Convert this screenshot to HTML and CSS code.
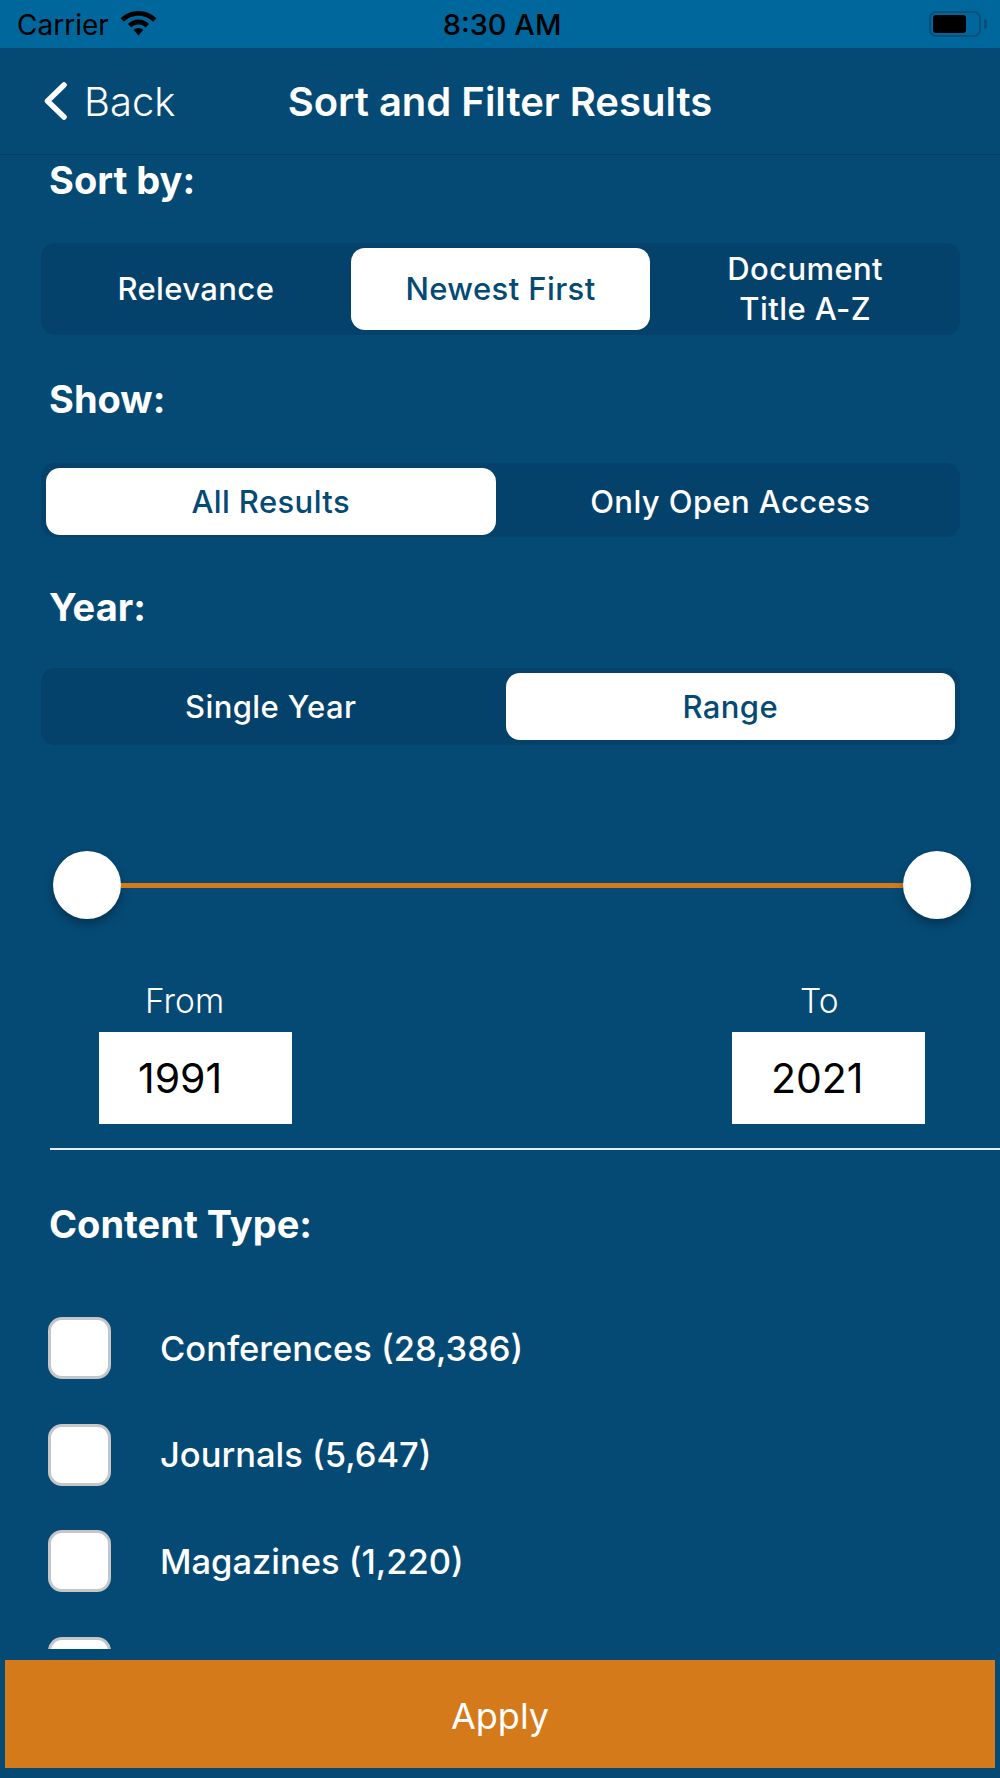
FILE: index.html
```html
<!DOCTYPE html>
<html lang="en">
<head>
  <meta charset="UTF-8">
  <title>Sort and Filter Results</title>
  <link rel="stylesheet" href="styles.css">
</head>
<body>
  <div class="status-bar">
    <div class="status-left">
      <span class="carrier">Carrier</span>
      <svg class="wifi-icon" width="37" height="25" viewBox="0 0 37 25">
        <path d="M18.5 0C11.5 0 5.2 2.8 .6 7.300L3.900 10.800C7.700 7.100 12.800 4.800 18.500 4.800S29.300 7.100 33.100 10.800L36.400 7.300C31.800 2.800 25.500 0 18.500 0Z"/>
        <path d="M18.500 8.600C14.600 8.600 10.800 10.200 8 12.900L11.300 16.400C13.200 14.600 15.800 13.400 18.500 13.400S23.800 14.600 25.700 16.400L29 12.900C26.200 10.200 22.400 8.600 18.500 8.600Z"/>
        <path d="M18.500 17C16.700 17 15.100 17.700 13.800 18.900L18.500 24.500L23.200 18.900C21.900 17.700 20.300 17 18.500 17Z"/>
      </svg>
    </div>
    <span class="clock">8:30 AM</span>
    <div class="status-right">
      <div class="battery"><div class="battery-level"></div></div>
      <div class="battery-nub"></div>
    </div>
  </div>

  <div class="nav-bar">
    <div class="back">
      <svg class="back-icon" width="25" height="40" viewBox="0 0 25 40">
        <path d="M21 4L4.500 20L21 36"/>
      </svg>
      <span>Back</span>
    </div>
    <span class="nav-title">Sort and Filter Results</span>
  </div>

  <div class="content">
    <h2 class="section-label sort-label">Sort by:</h2>
    <div class="segments segments-sort">
      <div class="segment">Relevance</div>
      <div class="segment active">Newest First</div>
      <div class="segment">Document<br>Title A-Z</div>
    </div>

    <h2 class="section-label show-label">Show:</h2>
    <div class="segments segments-short">
      <div class="segment active">All Results</div>
      <div class="segment">Only Open Access</div>
    </div>

    <h2 class="section-label year-label">Year:</h2>
    <div class="segments segments-short year-segments">
      <div class="segment">Single Year</div>
      <div class="segment active">Range</div>
    </div>

    <div class="slider">
      <div class="thumb"></div>
      <div class="track"></div>
      <div class="thumb"></div>
    </div>

    <div class="years">
      <div class="year-field">
        <span class="year-caption from-caption">From</span>
        <div class="year-input">1991</div>
      </div>
      <div class="year-field">
        <span class="year-caption to-caption">To</span>
        <div class="year-input">2021</div>
      </div>
    </div>

    <hr class="divider">

    <h2 class="section-label type-label">Content Type:</h2>
    <ul class="type-list">
      <li class="type-item"><span class="checkbox"></span>Conferences (28,386)</li>
      <li class="type-item"><span class="checkbox"></span>Journals (5,647)</li>
      <li class="type-item"><span class="checkbox"></span>Magazines (1,220)</li>
      <li class="type-item"><span class="checkbox"></span></li>
    </ul>
  </div>

  <div class="apply">Apply</div>
</body>
</html>
```
FILE: styles.css
```css
:root {
  --bg: #054a75;
  --status-bg: #00679c;
  --segment-bg: #05426b;
  --accent: #d57a1b;
}
* {
  box-sizing: border-box;
}
html, body {
  margin: 0;
  height: 100%;
}
body {
  display: flex;
  flex-direction: column;
  width: 1000px;
  height: 1778px;
  overflow: hidden;
  background: var(--bg);
  color: #fff;
  font-family: Inter, "Noto Sans", sans-serif;
}
.status-bar {
  display: grid;
  grid-template-columns: 1fr auto 1fr;
  align-items: center;
  flex: none;
  height: 48px;
  padding: 1px 13px 0 17px;
  background: var(--status-bg);
  color: #000;
  font-size: 28px;
}
.status-left {
  display: flex;
  align-items: center;
  gap: 11px;
}
.wifi-icon {
  margin-bottom: 3px;
}
.clock {
  font-size: 29px;
  font-weight: 500;
}
.status-right {
  display: flex;
  align-items: center;
  justify-content: flex-end;
  gap: 3px;
  margin-top: -1px;
}
.battery {
  width: 52px;
  height: 26px;
  padding: 2px;
  border: 2px solid #0a5079;
  border-radius: 7px;
}
.battery-level {
  width: 33px;
  height: 18px;
  background: #000;
  border-radius: 3px;
}
.battery-nub {
  width: 3px;
  height: 10px;
  background: #0a5079;
  border-radius: 0 3px 3px 0;
}
.nav-bar {
  display: grid;
  grid-template-columns: 1fr auto 1fr;
  align-items: center;
  flex: none;
  height: 107px;
  padding: 0 43px;
  border-bottom: 1px solid #053f64;
}
.back {
  display: flex;
  align-items: center;
  gap: 16px;
  font-size: 40px;
  font-weight: 300;
}
.back-icon {
  fill: none;
  stroke: #fff;
  stroke-width: 5.500;
  stroke-linecap: round;
  stroke-linejoin: round;
}
.nav-title {
  font-size: 40px;
  font-weight: 600;
}
.content {
  flex: 1;
  min-height: 0;
  overflow: hidden;
  padding: 0 40px 0 41px;
}
.section-label {
  margin: 0 0 0 8px;
  font-size: 38px;
  font-weight: 700;
  line-height: 40px;
}
.sort-label {
  margin-top: 5px;
}
.show-label {
  margin-top: 44px;
}
.year-label {
  margin-top: 50px;
}
.segments {
  display: flex;
  margin-top: 44px;
  padding: 5px;
  background: var(--segment-bg);
  border-radius: 14px;
  font-size: 31px;
  font-weight: 500;
  letter-spacing: .4px;
}
.segments-sort {
  height: 92px;
  margin-top: 43px;
  gap: 5px;
}
.segments-short {
  height: 74px;
  padding-bottom: 2px;
  gap: 10px;
}
.year-segments {
  height: 77px;
  margin-top: 41px;
  padding-bottom: 5px;
}
.segment {
  display: flex;
  flex: 1;
  align-items: center;
  justify-content: center;
  border-radius: 14px;
  text-align: center;
  line-height: 40px;
}
.segment.active {
  background: #fff;
  color: var(--bg);
}
.slider {
  display: flex;
  align-items: center;
  margin: 106px -11px 0 12px;
}
.thumb {
  flex: none;
  width: 68px;
  height: 68px;
  background: #fff;
  border-radius: 50%;
  box-shadow: 0 5px 10px rgba(0, 0, 0, .3);
}
.track {
  flex: 1;
  height: 5px;
  background: var(--accent);
}
.years {
  display: flex;
  justify-content: space-between;
  margin: 62px 35px 0 58px;
}
.year-field {
  width: 193px;
}
.year-caption {
  display: block;
  font-size: 33.500px;
  font-weight: 300;
  line-height: 40px;
}
.from-caption {
  margin-left: 46px;
}
.to-caption {
  margin-left: 68px;
}
.year-input {
  height: 92px;
  margin-top: 11px;
  padding-left: 39px;
  background: #fff;
  color: #000;
  font-size: 41px;
  line-height: 92px;
}
.divider {
  height: 2px;
  margin: 24px -40px 0 9px;
  border: none;
  background: #e6edf2;
}
.type-label {
  margin-top: 54px;
}
.type-list {
  margin: 73px 0 0 7px;
  padding: 0;
  list-style: none;
}
.type-item {
  display: flex;
  align-items: center;
  gap: 49px;
  height: 62px;
  margin-bottom: 44.500px;
  font-size: 34.500px;
  font-weight: 500;
}
.checkbox {
  flex: none;
  width: 63px;
  height: 62px;
  background: #fff;
  border: 3px solid #c4c6c8;
  border-radius: 14px;
}
.apply {
  flex: none;
  height: 108px;
  margin: 11px 5px 10px;
  background: var(--accent);
  font-size: 36px;
  line-height: 112px;
  text-align: center;
}
```
